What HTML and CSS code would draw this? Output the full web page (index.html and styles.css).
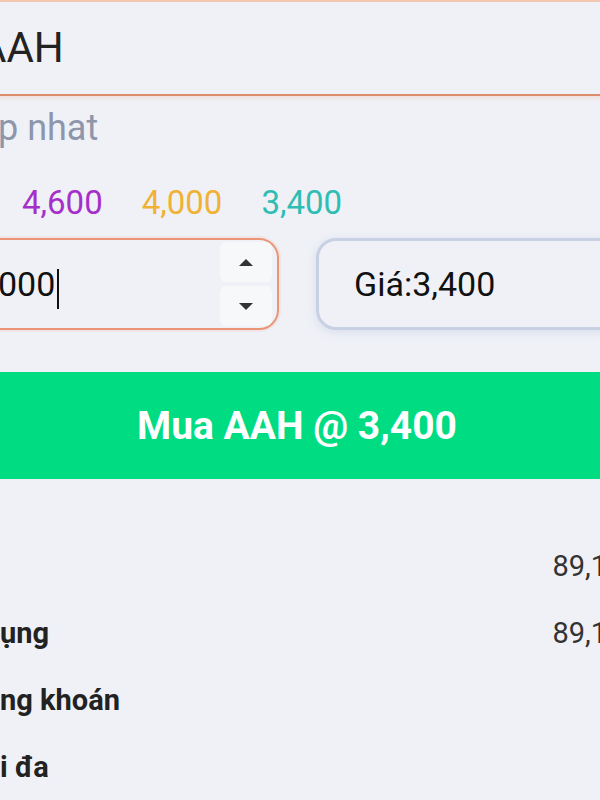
FILE: index.html
```html
<!DOCTYPE html>
<html lang="vi">
<head>
    <meta charset="UTF-8">
    <meta name="viewport" content="width=device-width, initial-scale=1.0">
    <title>Đặt lệnh mua</title>
    <link rel="stylesheet" href="styles.css">
</head>
<body>

    <div class="screen">
        <div class="symbol">AAH</div>
        <div class="hint">p nhat</div>

        <div class="prices">
            <span class="ceil">4,600</span>
            <span class="ref">4,000</span>
            <span class="floor">3,400</span>
        </div>

        <div class="inputs">
            <div class="qty">
                <span class="qty-value">000</span><span class="caret"></span>
                <div class="spin">
                    <div class="spin-btn"><span class="arrow-up"></span></div>
                    <div class="spin-btn"><span class="arrow-down"></span></div>
                </div>
            </div>
            <div class="price">Giá:3,400</div>
        </div>

        <div class="buy">Mua AAH @ 3,400</div>

        <div class="rows">
            <div class="row"><span class="label"></span><span class="value">89,1</span></div>
            <div class="row"><span class="label">ụng</span><span class="value">89,1</span></div>
            <div class="row"><span class="label">ng khoán</span></div>
            <div class="row"><span class="label">i đa</span></div>
        </div>
    </div>

</body>
</html>
```

FILE: styles.css
```css
body {
    margin: 0;
    overflow: hidden;
    background-color: #eff1f7;
    font-family: Roboto, "Noto Sans", sans-serif;
    color: #222;
}
.screen {
    margin-left: -60px;
    width: 714px;
}
.symbol {
    height: 92px;
    line-height: 92px;
    font-size: 42px;
    padding-left: 39px;
    border-top: 2px solid #f3c6b2;
    border-bottom: 2px solid #dc8d6c;
    box-shadow: 0 3px 3px rgba(240, 140, 110, 0.15);
}
.hint {
    height: 60px;
    line-height: 64px;
    font-size: 36px;
    color: #8d96ab;
    padding-left: 58px;
}
.prices {
    display: flex;
    gap: 39px;
    margin-top: 27px;
    padding-left: 82px;
    font-size: 33px;
    line-height: 40px;
}
.ceil {
    color: #a530c9;
}
.ref {
    color: #efb234;
}
.floor {
    color: #2fbdb3;
}
.inputs {
    display: flex;
    gap: 37px;
    height: 92px;
    margin-top: 15px;
}
.qty {
    display: flex;
    align-items: center;
    width: 339px;
    box-sizing: border-box;
    border: 2px solid #ea9674;
    border-radius: 20px;
    box-shadow: 0 0 0 2px rgba(240, 150, 110, 0.12);
    padding-left: 56px;
    font-size: 34px;
    line-height: 88px;
    color: #111;
}
.caret {
    display: inline-block;
    width: 2px;
    height: 40px;
    margin-left: 2px;
    background-color: #111;
    align-self: center;
    margin-top: 10px;
}
.spin {
    display: flex;
    flex-direction: column;
    gap: 4px;
    width: 52px;
    height: 84px;
    margin-left: auto;
    margin-right: 5px;
}
.spin-btn {
    flex: 1;
    display: flex;
    align-items: center;
    justify-content: center;
    background-color: #f7f8fa;
    border-radius: 6px;
}
.arrow-up,
.arrow-down {
    width: 0;
    height: 0;
    border-left: 7px solid transparent;
    border-right: 7px solid transparent;
}
.arrow-up {
    border-bottom: 7px solid #333;
}
.arrow-down {
    border-top: 7px solid #333;
}
.price {
    flex: 1;
    border: 3px solid #c8d1e3;
    border-radius: 20px;
    box-shadow: 0 2px 8px rgba(150, 165, 200, 0.25);
    padding-left: 35px;
    font-size: 34px;
    line-height: 86px;
    color: #111;
}
.buy {
    margin-top: 42px;
    height: 107px;
    line-height: 109px;
    background-color: #00dc82;
    color: #fff;
    font-size: 39px;
    font-weight: bold;
    text-align: center;
}
.rows {
    margin-top: 54px;
}
.row {
    display: flex;
    justify-content: space-between;
    height: 67px;
    line-height: 67px;
    padding: 0 47px 0 60px;
    font-size: 29px;
}
.label {
    font-weight: bold;
    color: #222;
}
.value {
    color: #333;
}
```
